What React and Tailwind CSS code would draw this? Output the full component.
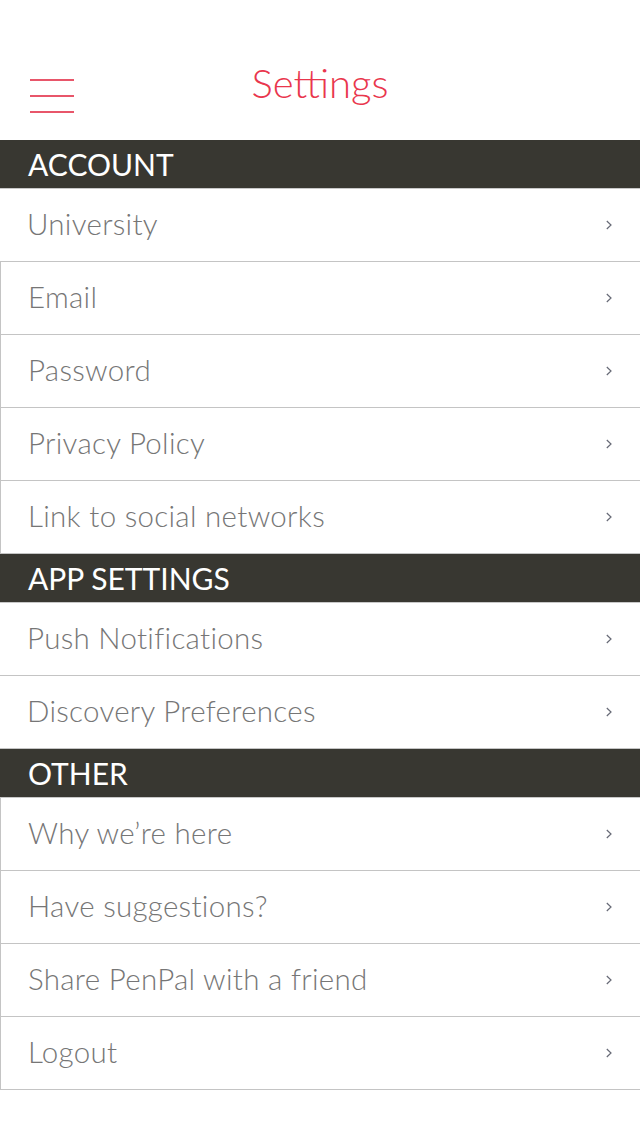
const sections = [
	{
		title: "ACCOUNT",
		rows: [
			{ label: "University", edge: false },
			{ label: "Email", edge: true },
			{ label: "Password", edge: true },
			{ label: "Privacy Policy", edge: true },
			{ label: "Link to social networks", edge: true },
		],
	},
	{
		title: "APP SETTINGS",
		rows: [
			{ label: "Push Notifications", edge: false },
			{ label: "Discovery Preferences", edge: false },
		],
	},
	{
		title: "OTHER",
		rows: [
			{ label: "Why we’re here", edge: true },
			{ label: "Have suggestions?", edge: true },
			{ label: "Share PenPal with a friend", edge: true },
			{ label: "Logout", edge: true },
		],
	},
];

function Chevron() {
	return (
		<svg width="8" height="12" viewBox="0 0 8 12" className="shrink-0">
			<polyline points="1.8,2 6,6 1.8,10" fill="none" stroke="#676a76" strokeWidth="1.2" />
		</svg>
	);
}

function Row({ label, edge }) {
	return (
		<div
			className={
				"h-[73px] flex items-center justify-between pl-[27px] pr-[27px] border-b border-[#c4c4c4] " +
				(edge ? "border-l" : "")
			}
		>
			<span className="text-[29.5px] font-light text-[#767676] leading-none tracking-[0.3px] -mt-[2px]">{label}</span>
			<Chevron />
		</div>
	);
}

export default function App() {
	return (
		<main
			className="w-[640px] min-h-[1136px] bg-white"
			style={{ fontFamily: "'Lato Light', Lato, 'Noto Sans', sans-serif" }}
		>
			<header className="h-[140px] relative flex items-center justify-center">
				<button className="absolute left-[30px] top-[79px] w-[44px] flex flex-col gap-[14px]">
					<span className="block h-[2px] bg-[#e8566a]" />
					<span className="block h-[2px] bg-[#e8566a]" />
					<span className="block h-[2px] bg-[#e8566a]" />
				</button>
				<h1 className="text-[40px] font-light text-[#e9364d] leading-none mt-[26px]">Settings</h1>
			</header>
			{sections.map(s => (
				<section key={s.title}>
					<div className="h-[49px] bg-[#383731] border-b border-[#c8c8c8] flex items-center pl-[28px]">
						<h2 className="text-white text-[30px] font-normal leading-none" style={{ fontFamily: "Lato, sans-serif" }}>{s.title}</h2>
					</div>
					{s.rows.map(r => (
						<Row key={r.label} {...r} />
					))}
				</section>
			))}
		</main>
	);
}
